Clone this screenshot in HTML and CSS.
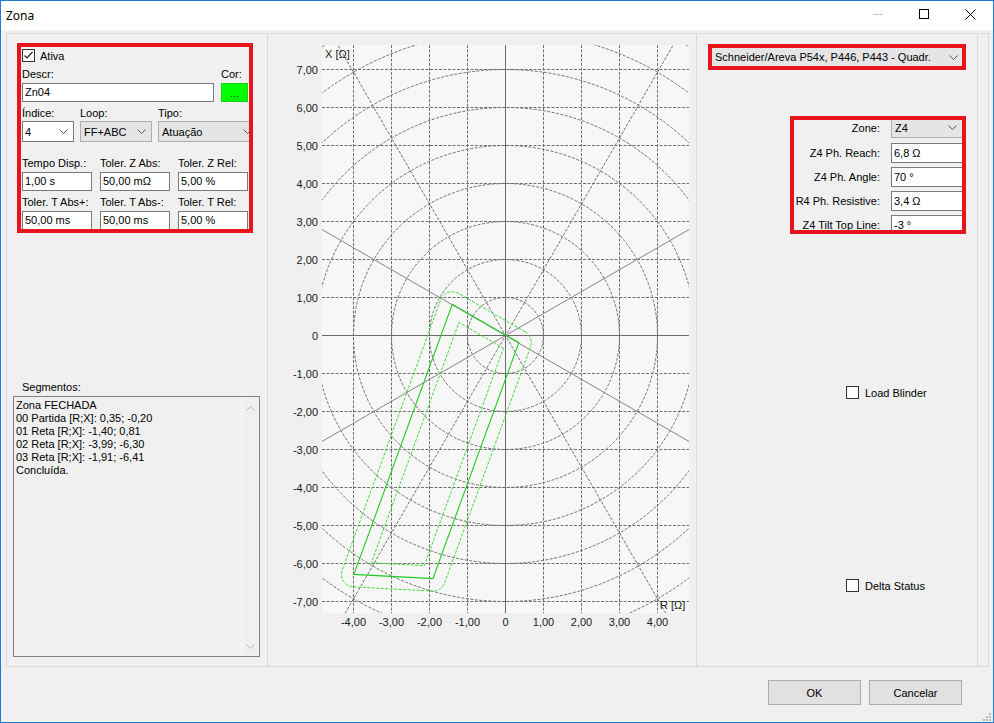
FILE: index.html
```html
<!DOCTYPE html>
<html lang="pt">
<head>
<meta charset="utf-8">
<title>Zona</title>
<link rel="stylesheet" href="styles.css">
</head>
<body>
<div class="window">
  <div class="titlebar">
    <span class="title">Zona</span>
    <div class="tb-buttons">
      <div class="tb-btn"><svg width="10" height="10"><path d="M0 5.5H10" stroke="#c8c8c8"/></svg></div>
      <div class="tb-btn"><svg width="10" height="10"><rect x="0.5" y="0.5" width="9" height="9" fill="none" stroke="#000"/></svg></div>
      <div class="tb-btn"><svg width="11" height="11"><path d="M0.5 0.5L10.5 10.5M10.5 0.5L0.5 10.5" stroke="#000" fill="none"/></svg></div>
    </div>
  </div>
  <div class="client">
    <div class="frame">
      <div class="pane pane-left">
        <div class="redbox fields">
          <div class="row r-check">
            <svg class="cbox" width="13" height="13"><rect x="0.5" y="0.5" width="12" height="12" fill="#fff" stroke="#333"/><path d="M2.5 6.5L5 9L10.5 3" stroke="#222" stroke-width="1.2" fill="none"/></svg>
            <span>Ativa</span>
          </div>
          <div class="row r-lbl1">
            <span class="l-descr">Descr:</span><span>Cor:</span>
          </div>
          <div class="row r-in1">
            <div class="tb w-descr">Zn04</div>
            <div class="colorbtn">...</div>
          </div>
          <div class="row r-lbl2">
            <span class="c1">Índice:</span><span class="c2">Loop:</span><span>Tipo:</span>
          </div>
          <div class="row r-sel">
            <div class="cb white w-ind"><span>4</span><svg class="chev" width="9" height="5"><path d="M0.5 0.5L4.5 4.5L8.5 0.5" stroke="#555" fill="none"/></svg></div>
            <div class="cb w-loop"><span>FF+ABC</span><svg class="chev" width="9" height="5"><path d="M0.5 0.5L4.5 4.5L8.5 0.5" stroke="#555" fill="none"/></svg></div>
            <div class="cb w-tipo"><span>Atuação</span><svg class="chev" width="9" height="5"><path d="M0.5 0.5L4.5 4.5L8.5 0.5" stroke="#555" fill="none"/></svg></div>
          </div>
          <div class="row r-lbl3">
            <span class="d1">Tempo Disp.:</span><span class="d1">Toler. Z Abs:</span><span>Toler. Z Rel:</span>
          </div>
          <div class="row r-in3">
            <div class="tb w-70">1,00 s</div><div class="tb w-70">50,00 mΩ</div><div class="tb w-70">5,00 %</div>
          </div>
          <div class="row r-lbl4">
            <span class="d1">Toler. T Abs+:</span><span class="d1">Toler. T Abs-:</span><span>Toler. T Rel:</span>
          </div>
          <div class="row r-in4">
            <div class="tb w-70">50,00 ms</div><div class="tb w-70">50,00 ms</div><div class="tb w-70">5,00 %</div>
          </div>
        </div>
        <div class="seg-label">Segmentos:</div>
        <div class="seg-box">
          <div class="seg-text">Zona FECHADA<br>00 Partida [R;X]: 0,35; -0,20<br>01 Reta [R;X]: -1,40; 0,81<br>02 Reta [R;X]: -3,99; -6,30<br>03 Reta [R;X]: -1,91; -6,41<br>Concluída.</div>
          <div class="vscroll">
            <svg width="9" height="5"><path d="M0.5 4.5L4.5 0.5L8.5 4.5" stroke="#b5b5b5" fill="none"/></svg>
            <svg width="9" height="5"><path d="M0.5 0.5L4.5 4.5L8.5 0.5" stroke="#b5b5b5" fill="none"/></svg>
          </div>
        </div>
      </div>
      <div class="pane pane-chart">
        <svg class="chart" width="428" height="632" viewBox="268 34 428 632">
          <defs><clipPath id="plot"><rect x="322" y="45" width="367" height="568"/></clipPath></defs>
          <rect x="322" y="45" width="367" height="568" fill="#f7f7f7"/>
          <g clip-path="url(#plot)" fill="none" stroke="#707070" stroke-width="1" stroke-dasharray="3 1.5">
            <path d="M353.5 45V613M391.5 45V613M429.5 45V613M467.5 45V613M543.5 45V613M581.5 45V613M619.5 45V613M657.5 45V613"/>
            <path d="M322 69.5H689M322 107.5H689M322 145.5H689M322 183.5H689M322 221.5H689M322 259.5H689M322 297.5H689M322 373.5H689M322 411.5H689M322 449.5H689M322 487.5H689M322 525.5H689M322 563.5H689M322 601.5H689"/>
            <circle cx="505.5" cy="335.5" r="38"/>
            <circle cx="505.5" cy="335.5" r="76"/>
            <circle cx="505.5" cy="335.5" r="114"/>
            <circle cx="505.5" cy="335.5" r="152"/>
            <circle cx="505.5" cy="335.5" r="190"/>
            <circle cx="505.5" cy="335.5" r="228"/>
            <circle cx="505.5" cy="335.5" r="266"/>
            <circle cx="505.5" cy="335.5" r="304"/>
            <circle cx="505.5" cy="335.5" r="342"/>
            <path d="M205.5 855.1L805.5 -184.1M205.5 -184.1L805.5 855.1"/>
          </g>
          <g clip-path="url(#plot)" fill="none" stroke="#858585" stroke-width="1">
            <path d="M-14.1 635.5L1025.1 35.5M-14.1 35.5L1025.1 635.5"/>
            <path d="M505.5 45V613M322 335.5H689" stroke="#6a6a6a"/>
          </g>
          <g fill="none" clip-path="url(#plot)">
            <path d="M525.05 331.78L458.55 293.38A12.5 12.5 0 0 0 440.56 299.93L342.16 570.13A12.5 12.5 0 0 0 353.24 586.88L432.24 591.08A12.5 12.5 0 0 0 444.65 582.88L530.55 346.88A12.5 12.5 0 0 0 525.05 331.78Z" stroke="#3cdc3c" stroke-dasharray="3 1.5"/>
            <path d="M503.5 348.2L458.9 322.5L371.4 562.8L424.3 565.6Z" stroke="#3cdc3c" stroke-dasharray="3 1.5"/>
            <path d="M518.8 342.6L452.3 304.2L353.9 574.4L432.9 578.6Z" stroke="#1fcc1f" stroke-width="1.1"/>
          </g>
          <g class="ax" text-anchor="end">
            <text x="318" y="73.5">7,00</text>
            <text x="318" y="111.5">6,00</text>
            <text x="318" y="149.5">5,00</text>
            <text x="318" y="187.5">4,00</text>
            <text x="318" y="225.5">3,00</text>
            <text x="318" y="263.5">2,00</text>
            <text x="318" y="301.5">1,00</text>
            <text x="318" y="339.5">0</text>
            <text x="318" y="377.5">-1,00</text>
            <text x="318" y="415.5">-2,00</text>
            <text x="318" y="453.5">-3,00</text>
            <text x="318" y="491.5">-4,00</text>
            <text x="318" y="529.5">-5,00</text>
            <text x="318" y="567.5">-6,00</text>
            <text x="318" y="605.5">-7,00</text>
          </g>
          <g class="ax" text-anchor="middle">
            <text x="353.5" y="626">-4,00</text>
            <text x="391.5" y="626">-3,00</text>
            <text x="429.5" y="626">-2,00</text>
            <text x="467.5" y="626">-1,00</text>
            <text x="505.5" y="626">0</text>
            <text x="543.5" y="626">1,00</text>
            <text x="581.5" y="626">2,00</text>
            <text x="619.5" y="626">3,00</text>
            <text x="657.5" y="626">4,00</text>
          </g>
          <text class="ax" x="325" y="58">X [Ω]</text>
          <text class="ax" x="660" y="609">R [Ω]</text>
        </svg>
      </div>
      <div class="pane pane-right">
        <div class="redbox model">
          <span>Schneider/Areva P54x, P446, P443 - Quadr.</span>
          <svg class="chev" width="9" height="5"><path d="M0.5 0.5L4.5 4.5L8.5 0.5" stroke="#555" fill="none"/></svg>
        </div>
        <div class="redbox params">
          <div class="prow p0"><span class="plbl">Zone:</span><div class="cb w-pin"><span>Z4</span><svg class="chev" width="9" height="5"><path d="M0.5 0.5L4.5 4.5L8.5 0.5" stroke="#555" fill="none"/></svg></div></div>
          <div class="prow p1"><span class="plbl">Z4 Ph. Reach:</span><div class="tb pin">6,8 Ω</div></div>
          <div class="prow pn"><span class="plbl">Z4 Ph. Angle:</span><div class="tb pin">70 °</div></div>
          <div class="prow pn"><span class="plbl">R4 Ph. Resistive:</span><div class="tb pin">3,4 Ω</div></div>
          <div class="prow pn"><span class="plbl">Z4 Tilt Top Line:</span><div class="tb pin">-3 °</div></div>
        </div>
        <div class="chkrow load">
          <svg class="cbox" width="13" height="13"><rect x="0.5" y="0.5" width="12" height="12" fill="#fff" stroke="#333"/></svg>
          <span>Load Blinder</span>
        </div>
        <div class="chkrow delta">
          <svg class="cbox" width="13" height="13"><rect x="0.5" y="0.5" width="12" height="12" fill="#fff" stroke="#333"/></svg>
          <span>Delta Status</span>
        </div>
      </div>
      <div class="pane-filler"></div>
    </div>
    <div class="footer">
      <button class="btn">OK</button>
      <button class="btn">Cancelar</button>
      <svg class="grip" width="11" height="11"><g fill="#b8b8b8"><rect x="8" y="2" width="2" height="2"/><rect x="5" y="5" width="2" height="2"/><rect x="8" y="5" width="2" height="2"/><rect x="2" y="8" width="2" height="2"/><rect x="5" y="8" width="2" height="2"/><rect x="8" y="8" width="2" height="2"/></g></svg>
    </div>
  </div>
</div>
</body>
</html>
```

FILE: styles.css
```css
html, body {
  margin: 0;
  padding: 0;
  background: #f0f0f0;
}
body {
  font-family: "Liberation Sans", Arial, sans-serif;
  font-size: 11px;
  color: #000;
}
.window {
  width: 994px;
  height: 723px;
  box-sizing: border-box;
  border: 1px solid #1c7cd5;
  background: #f0f0f0;
  display: flex;
  flex-direction: column;
  overflow: hidden;
}
.titlebar {
  height: 29px;
  flex: none;
  background: #fff;
  display: flex;
  align-items: center;
}
.title {
  font-family: "Noto Sans", "Open Sans", sans-serif;
  font-size: 12px;
  margin-left: 5px;
  margin-top: -1px;
}
.tb-buttons {
  margin-left: auto;
  display: flex;
  height: 29px;
}
.tb-btn {
  width: 46px;
  height: 29px;
  display: flex;
  align-items: center;
  justify-content: center;
}
.tb-btn svg { display: block; margin-top: -3px; }

.client {
  flex: 1;
  display: flex;
  flex-direction: column;
  padding: 3px 4px 0 5px;
}
.frame {
  height: 634px;
  flex: none;
  box-sizing: border-box;
  border: 1px solid #dadada;
  display: flex;
}
.pane {
  flex: none;
  border-right: 1px solid #dadada;
  height: 100%;
}
.pane-left { width: 260px; }
.pane-chart { width: 428px; }
.pane-right { width: 280px; }
.pane-filler { flex: 1; }

.redbox {
  box-sizing: border-box;
  border: 4px solid #e8141c;
  overflow: hidden;
}
.fields {
  margin: 9px 0 0 10px;
  width: 236px;
  height: 190px;
  padding-left: 1px;
}
.row {
  display: flex;
  align-items: center;
  white-space: nowrap;
}
.r-check { margin-top: 2px; height: 13px; gap: 5px; }
.cbox { display: block; flex: none; }
.r-lbl1 { margin-top: 5px; height: 13px; }
.l-descr { width: 199px; }
.r-in1 { margin-top: 3px; height: 19px; gap: 7px; }
.r-lbl2 { margin-top: 4px; height: 13px; }
.c1 { width: 58px; }
.c2 { width: 78px; }
.r-sel { margin-top: 2px; height: 21px; gap: 6px; }
.r-lbl3 { margin-top: 14px; height: 13px; }
.r-lbl4 { margin-top: 4px; height: 13px; }
.d1 { width: 78px; }
.r-in3, .r-in4 { margin-top: 3px; height: 19px; gap: 8px; }

.tb {
  box-sizing: border-box;
  height: 19px;
  border: 1px solid #7a7a7a;
  background: #fff;
  padding: 0 2px;
  line-height: 17px;
  white-space: nowrap;
  flex: none;
  overflow: hidden;
}
.w-descr { width: 192px; }
.w-70 { width: 70px; }
.colorbtn {
  box-sizing: border-box;
  width: 27px;
  height: 19px;
  background: #00ff00;
  border: 1px solid #1ad41a;
  text-align: center;
  line-height: 19px;
  color: #333;
  flex: none;
}
.cb {
  box-sizing: border-box;
  height: 21px;
  border: 1px solid #adadad;
  background: #e5e5e5;
  display: flex;
  align-items: center;
  padding-left: 3px;
  flex: none;
  white-space: nowrap;
}
.cb.white { background: #fff; border-color: #7a7a7a; padding-left: 2px; }
.chev { display: block; margin-left: auto; margin-right: 5px; flex: none; }
.w-ind { width: 52px; }
.w-loop { width: 72px; }
.w-tipo { width: 100px; }

.seg-label {
  margin-top: 148px;
  padding-left: 15px;
  height: 13px;
  line-height: 13px;
}
.seg-box {
  margin: 2px 0 0 6px;
  width: 247px;
  height: 261px;
  box-sizing: border-box;
  border: 1px solid #828282;
  background: #f0f0f0;
  display: flex;
}
.seg-text {
  flex: 1;
  padding: 2px 0 0 2px;
  line-height: 13px;
  white-space: nowrap;
}
.vscroll {
  width: 17px;
  border-left: 1px solid #f8f8f8;
  display: flex;
  flex-direction: column;
  justify-content: space-between;
  align-items: center;
  padding: 9px 0 7px;
}
.vscroll svg { display: block; }

.chart { display: block; }
.ax {
  font-family: "Liberation Sans", Arial, sans-serif;
  font-size: 11px;
  fill: #1a1a1a;
}

.model {
  margin: 10px 0 0 11px;
  width: 258px;
  height: 26px;
  background: #e5e5e5;
  display: flex;
  align-items: center;
  padding-left: 3px;
  white-space: nowrap;
}
.model .chev { margin-right: 4px; }
.params {
  margin: 46px 0 0 93px;
  width: 176px;
  height: 118px;
}
.prow {
  display: flex;
  align-items: center;
  gap: 11px;
  white-space: nowrap;
}
.plbl {
  width: 86px;
  text-align: right;
  flex: none;
}
.p0 { margin-top: -3px; height: 21px; }
.p1 { margin-top: 5px; height: 20px; }
.pn { margin-top: 4px; height: 20px; }
.w-pin { width: 72px; }
.pin { width: 72px; height: 20px; line-height: 18px; }

.chkrow {
  display: flex;
  align-items: center;
  gap: 6px;
  height: 13px;
  margin-left: 149px;
  white-space: nowrap;
}
.load { margin-top: 152px; }
.delta { margin-top: 180px; }

.footer {
  height: 55px;
  flex: none;
  display: flex;
  justify-content: flex-end;
  align-items: flex-start;
  gap: 8px;
  padding: 13px 27px 0 0;
  box-sizing: border-box;
  position: relative;
}
.btn {
  width: 93px;
  height: 25px;
  box-sizing: border-box;
  border: 1px solid #adadad;
  background: #e1e1e1;
  font-family: "Liberation Sans", Arial, sans-serif;
  font-size: 11px;
  color: #000;
  padding: 0;
  margin: 0;
}
.grip {
  position: absolute;
  right: -3px;
  bottom: 0;
  display: block;
}
```
